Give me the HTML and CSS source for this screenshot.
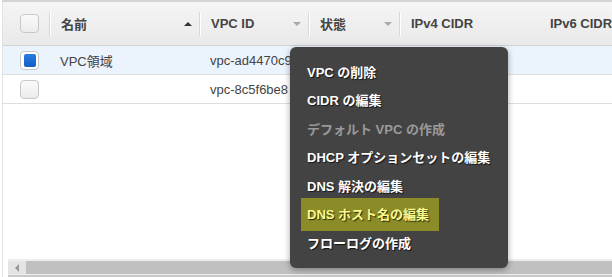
FILE: index.html
```html
<!DOCTYPE html>
<html lang="ja">
<head>
    <meta charset="UTF-8">
    <title>VPC</title>
    <link rel="stylesheet" href="styles.css">
</head>
<body>
    <div class="grid-panel">
        <!-- Column headers -->
        <div class="grid-row grid-head">
            <div class="cell cell-check"><span class="checkbox"></span></div>
            <div class="cell"><span class="sep"></span><span class="label">名前</span><span class="sort sort-up"></span></div>
            <div class="cell"><span class="sep"></span><span class="label">VPC ID</span><span class="sort sort-down"></span></div>
            <div class="cell"><span class="sep"></span><span class="label">状態</span><span class="sort sort-down"></span></div>
            <div class="cell"><span class="sep"></span><span class="label">IPv4 CIDR</span></div>
            <div class="cell"><span class="sep"></span><span class="label">IPv6 CIDR</span></div>
        </div>

        <div class="grid-row grid-item selected">
            <div class="cell cell-check"><span class="checkbox checked"><span class="tick"></span></span></div>
            <div class="cell"><span class="label">VPC領域</span></div>
            <div class="cell"><span class="label">vpc-ad4470c9</span></div>
            <div class="cell"></div>
            <div class="cell"></div>
            <div class="cell"></div>
        </div>

        <div class="grid-row grid-item">
            <div class="cell cell-check"><span class="checkbox"></span></div>
            <div class="cell"></div>
            <div class="cell"><span class="label">vpc-8c5f6be8</span></div>
            <div class="cell"></div>
            <div class="cell"></div>
            <div class="cell"></div>
        </div>

        <div class="grid-empty"></div>

        <!-- Horizontal scrollbar -->
        <div class="hscroll">
            <span class="hscroll-btn"><span class="arrow-left"></span></span>
            <span class="hscroll-thumb"></span>
        </div>
    </div>

    <!-- Actions context menu -->
    <ul class="action-menu">
        <li class="menu-item"><span>VPC の削除</span></li>
        <li class="menu-item"><span>CIDR の編集</span></li>
        <li class="menu-item disabled"><span>デフォルト VPC の作成</span></li>
        <li class="menu-item"><span>DHCP オプションセットの編集</span></li>
        <li class="menu-item"><span>DNS 解決の編集</span></li>
        <li class="menu-item active"><span>DNS ホスト名の編集</span></li>
        <li class="menu-item"><span>フローログの作成</span></li>
    </ul>
</body>
</html>
```

FILE: styles.css
```css
body {
    margin: 0 0 0 2px;
    font-family: 'Liberation Sans', 'Noto Sans CJK JP', sans-serif;
    font-size: 13px;
    color: #444;
    background: #fff;
    overflow: hidden;
}

.grid-panel {
    height: 277px;
    display: flex;
    flex-direction: column;
    border-left: 1px solid #e2e2e2;
    border-top: 2px solid #d4d4d4;
    box-sizing: border-box;
}

.grid-row {
    display: grid;
    grid-template-columns: 46px 150px 109px 91px 140px 1fr;
}

.grid-head {
    height: 43px;
    background: linear-gradient(#f5f5f5, #e9e9e9);
    border-bottom: 1px solid #d2d2d2;
    font-weight: bold;
}

.cell {
    display: flex;
    align-items: center;
    min-width: 0;
    white-space: nowrap;
}

.cell-check {
    padding-left: 17px;
}

.sep {
    width: 1px;
    height: 24px;
    background: #d8d8d8;
    box-shadow: 1px 0 0 #fff;
}

.label {
    margin-left: 11px;
}

.sort {
    margin-left: auto;
    margin-right: 7px;
    width: 0;
    height: 0;
    border-left: 4px solid transparent;
    border-right: 4px solid transparent;
}

.sort-up {
    border-bottom: 4px solid #333;
}

.sort-down {
    border-top: 4px solid #aaa;
}

.checkbox {
    width: 17px;
    height: 17px;
    border: 1px solid #c8c8c8;
    border-radius: 4px;
    background: linear-gradient(#fafafa, #ececec);
    display: flex;
    align-items: center;
    justify-content: center;
}

.checkbox.checked {
    background: #fff;
}

.tick {
    width: 12px;
    height: 13px;
    border-radius: 2px;
    background: linear-gradient(#2a7be0, #1360c2);
}

.grid-item {
    height: 28px;
    border-bottom: 1px solid #dedede;
}

.grid-item.selected {
    background: #ebf3fd;
}

.grid-empty {
    flex: 1;
}

.hscroll {
    margin: 0 0 2px 5px;
    height: 13px;
    display: flex;
    background: #e4e4e4;
    border-top: 2px solid #ededed;
    border-bottom: 1px solid #ededed;
    box-shadow: 0 2px 0 #c9c9c9;
}

.hscroll-btn {
    width: 18px;
    display: flex;
    align-items: center;
    justify-content: center;
}

.arrow-left {
    width: 0;
    height: 0;
    border-top: 4px solid transparent;
    border-bottom: 4px solid transparent;
    border-right: 4px solid #9a9a9a;
}

.hscroll-thumb {
    flex: 1;
    background: #c0c0c0;
}

/* Context menu sits above the grid */
.action-menu {
    position: absolute;
    left: 290px;
    top: 47px;
    width: 218px;
    height: 221px;
    box-sizing: border-box;
    margin: 0;
    padding: 11px 0 0 11px;
    list-style: none;
    background: #434343;
    border-radius: 6px;
    box-shadow: 0 2px 6px rgba(0, 0, 0, 0.35);
    font-weight: bold;
    color: #fff;
}

.menu-item {
    height: 28.5px;
    display: flex;
    align-items: center;
    white-space: nowrap;
    text-shadow: 1px 1px 1px rgba(0, 0, 0, 0.7);
}

.menu-item span {
    padding: 0 10px 0 6px;
    line-height: 33px;
    flex-shrink: 0;
}

.menu-item.disabled {
    color: #9a9a9a;
    text-shadow: none;
}

.menu-item.active span {
    background: #8b8b27;
    color: #fafa8c;
}
```
